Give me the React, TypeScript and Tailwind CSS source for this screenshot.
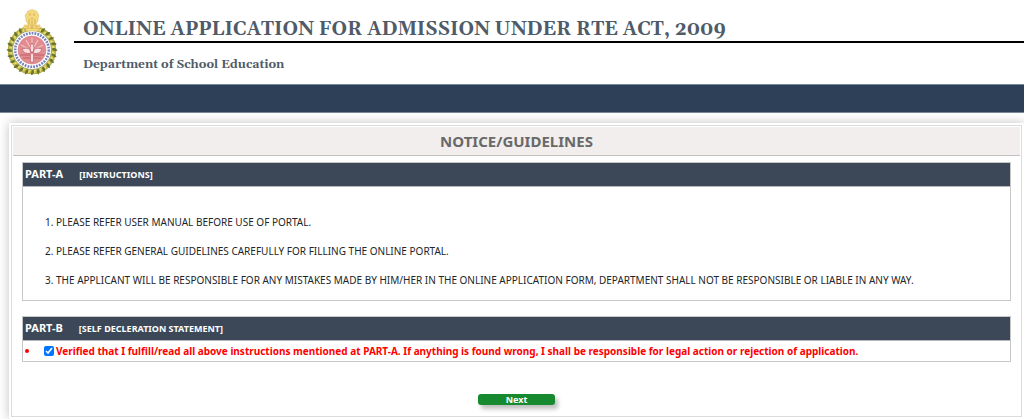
import { useState } from 'react';
import type { ReactNode } from 'react';

const instructions = [
  'PLEASE REFER USER MANUAL BEFORE USE OF PORTAL.',
  'PLEASE REFER GENERAL GUIDELINES CAREFULLY FOR FILLING THE ONLINE PORTAL.',
  'THE APPLICANT WILL BE RESPONSIBLE FOR ANY MISTAKES MADE BY HIM/HER IN THE ONLINE APPLICATION FORM, DEPARTMENT SHALL NOT BE RESPONSIBLE OR LIABLE IN ANY WAY.',
];

const leaves = Array.from({ length: 24 }, (_, i) => i * 15);

function Emblem() {
  return (
    <svg viewBox="0 0 52 66" className="h-[66px] w-[52px] shrink-0" role="img" aria-label="State emblem">
      {/* Wreath */}
      <circle cx="26" cy="41" r="22" fill="#fff" stroke="#b9b04a" strokeWidth="4.500" />
      {leaves.map((angle) => (
        <g key={angle} transform={`rotate(${angle} 26 41)`}>
          <path d="M25 21.500 Q22.500 18 26.500 15.500 Q28 19 25 21.500Z" fill="#66752f" />
          <path d="M27 22 Q30.500 21.500 30 18 Q27 18.500 27 22Z" fill="#e6d767" />
        </g>
      ))}
      <circle cx="26" cy="41" r="19.500" fill="#fff" stroke="#8f9140" strokeWidth="0.8" />
      {/* Lettering ring */}
      <circle cx="26" cy="41" r="16.800" fill="none" stroke="#7380bb" strokeWidth="2.600" strokeDasharray="1.800 1.100" />
      <circle cx="26" cy="41" r="14" fill="#e08c91" stroke="#dd8086" strokeWidth="0.6" />
      {/* Lotus and sun */}
      <path
        d="M26 29 V38 M20 31 L24 38 M32 31 L28 38 M15 36 L23 40 M37 36 L29 40"
        stroke="#f3c2c4"
        strokeWidth="1.200"
      />
      <path
        d="M26 34 Q30 39 26 44 Q22 39 26 34Z M16 40 Q24 37 25 44 Q18 46 16 40Z M36 40 Q28 37 27 44 Q34 46 36 40Z"
        fill="#f8dede"
        stroke="#c4606a"
        strokeWidth="0.8"
      />
      <path d="M14 46 H38 M17 49 H35" stroke="#c4606a" strokeWidth="1.200" />
      <path d="M24.500 45 V53 H27.500 V45" fill="#f8dede" stroke="#b5505c" strokeWidth="0.5" />
      {/* Lion capital */}
      <g fill="#f3d980" stroke="#deb957" strokeWidth="0.5">
        <path d="M21 4 Q21 1 24 1.500 Q26 -0.500 28 1.500 Q31 1 31.500 4 Q34 6 32 9 Q33 12 30.500 14 L30 16 H22 L21.500 14 Q19 12 20 9 Q18 6 21 4Z" />
        <path d="M18 16 H34 V19.500 H18Z" />
        <path d="M19 19.500 H33 L32 22 H20Z" />
      </g>
      <g stroke="#cda144" strokeWidth="0.7" fill="none">
        <path d="M24 4 V7 M28 4 V7 M24.500 9 Q26 10.500 27.500 9 M23 10 V15 M29 10 V15 M26 11 V15" />
        <path d="M20 17.800 H23 M29 17.800 H32" />
        <circle cx="26" cy="17.800" r="1.200" />
      </g>
    </svg>
  );
}

function Section({ part, title, children }: { part: string; title: string; children: ReactNode }) {
  return (
    <section className="border border-[#c8c8c8]">
      <h3 className="flex h-6 items-center gap-4 border-b border-[#b4b7bd] bg-[#3c4858] px-[2px] text-white">
        <span className="text-[11px] font-bold">{part}</span>
        <span className="text-[9px] font-bold">{title}</span>
      </h3>
      {children}
    </section>
  );
}

export default function App() {
  const [verified, setVerified] = useState(true);

  return (
    <div className="bg-white font-['Noto_Sans','Open_Sans',sans-serif] text-[#212529]">
      <header className="flex h-21 items-start gap-4 pt-[9px] pl-[6px]">
        <Emblem />
        <div className="flex-1 font-[Gelasio,Georgia,'Liberation_Serif',serif] font-bold text-[#4f5b69]">
          <h1 className="border-b-2 border-black pt-2 pl-[9px] text-[19px] leading-6 whitespace-nowrap">
            ONLINE APPLICATION FOR ADMISSION UNDER RTE ACT, 2009
          </h1>
          <p className="pt-3 pl-[9px] text-[12px] leading-5">Department of School Education</p>
        </div>
      </header>

      <nav className="h-[29px] border-y border-[#7b8896] bg-[#2e4057]" />

      <main className="pt-[10px] pl-[9px]">
        <div className="bg-white p-[2px] shadow-[0_0_10px_rgba(0,0,0,0.25)]">
          <div className="border border-[#dcdcdc] p-px">
            <h2 className="border-b border-[#c4c0c0] bg-[#f1eeed] text-center text-[15px] leading-[28px] font-bold text-[#696969]">
              NOTICE/GUIDELINES
            </h2>

            <div className="flex flex-col gap-[15px] px-[9px] pt-[6px]">
              <Section part="PART-A" title="[INSTRUCTIONS]">
                <ol className="list-decimal pt-[21px] pb-[5px] pl-[33px] text-[10px] leading-[29px]">
                  {instructions.map((text) => (
                    <li key={text}>{text}</li>
                  ))}
                </ol>
              </Section>

              <Section part="PART-B" title="[SELF DECLERATION STATEMENT]">
                <div className="flex h-5 items-center px-[2px] text-[10px] font-bold text-[#ff0000]">
                  <span className="w-[19px]">
                    <span className="block h-1 w-1 rounded-full bg-[#ff0000]" />
                  </span>
                  <input
                    id="verified"
                    type="checkbox"
                    checked={verified}
                    onChange={(e) => setVerified(e.target.checked)}
                    className="mr-[2px] h-[10px] w-[10px] accent-[#0075ff]"
                  />
                  <label htmlFor="verified">
                    Verified that I fulfill/read all above instructions mentioned at PART-A. If anything is found wrong, I
                    shall be responsible for legal action or rejection of application.
                  </label>
                </div>
              </Section>
            </div>

            <div className="flex justify-center pt-8 pb-[10px]">
              <button
                type="button"
                disabled={!verified}
                className="h-[11px] w-[77px] rounded-[3px] bg-[#178a30] text-[9px] leading-[11px] font-bold text-white shadow-[3px_4px_4px_rgba(0,0,0,0.25)]"
              >
                Next
              </button>
            </div>
          </div>
        </div>
      </main>
    </div>
  );
}
